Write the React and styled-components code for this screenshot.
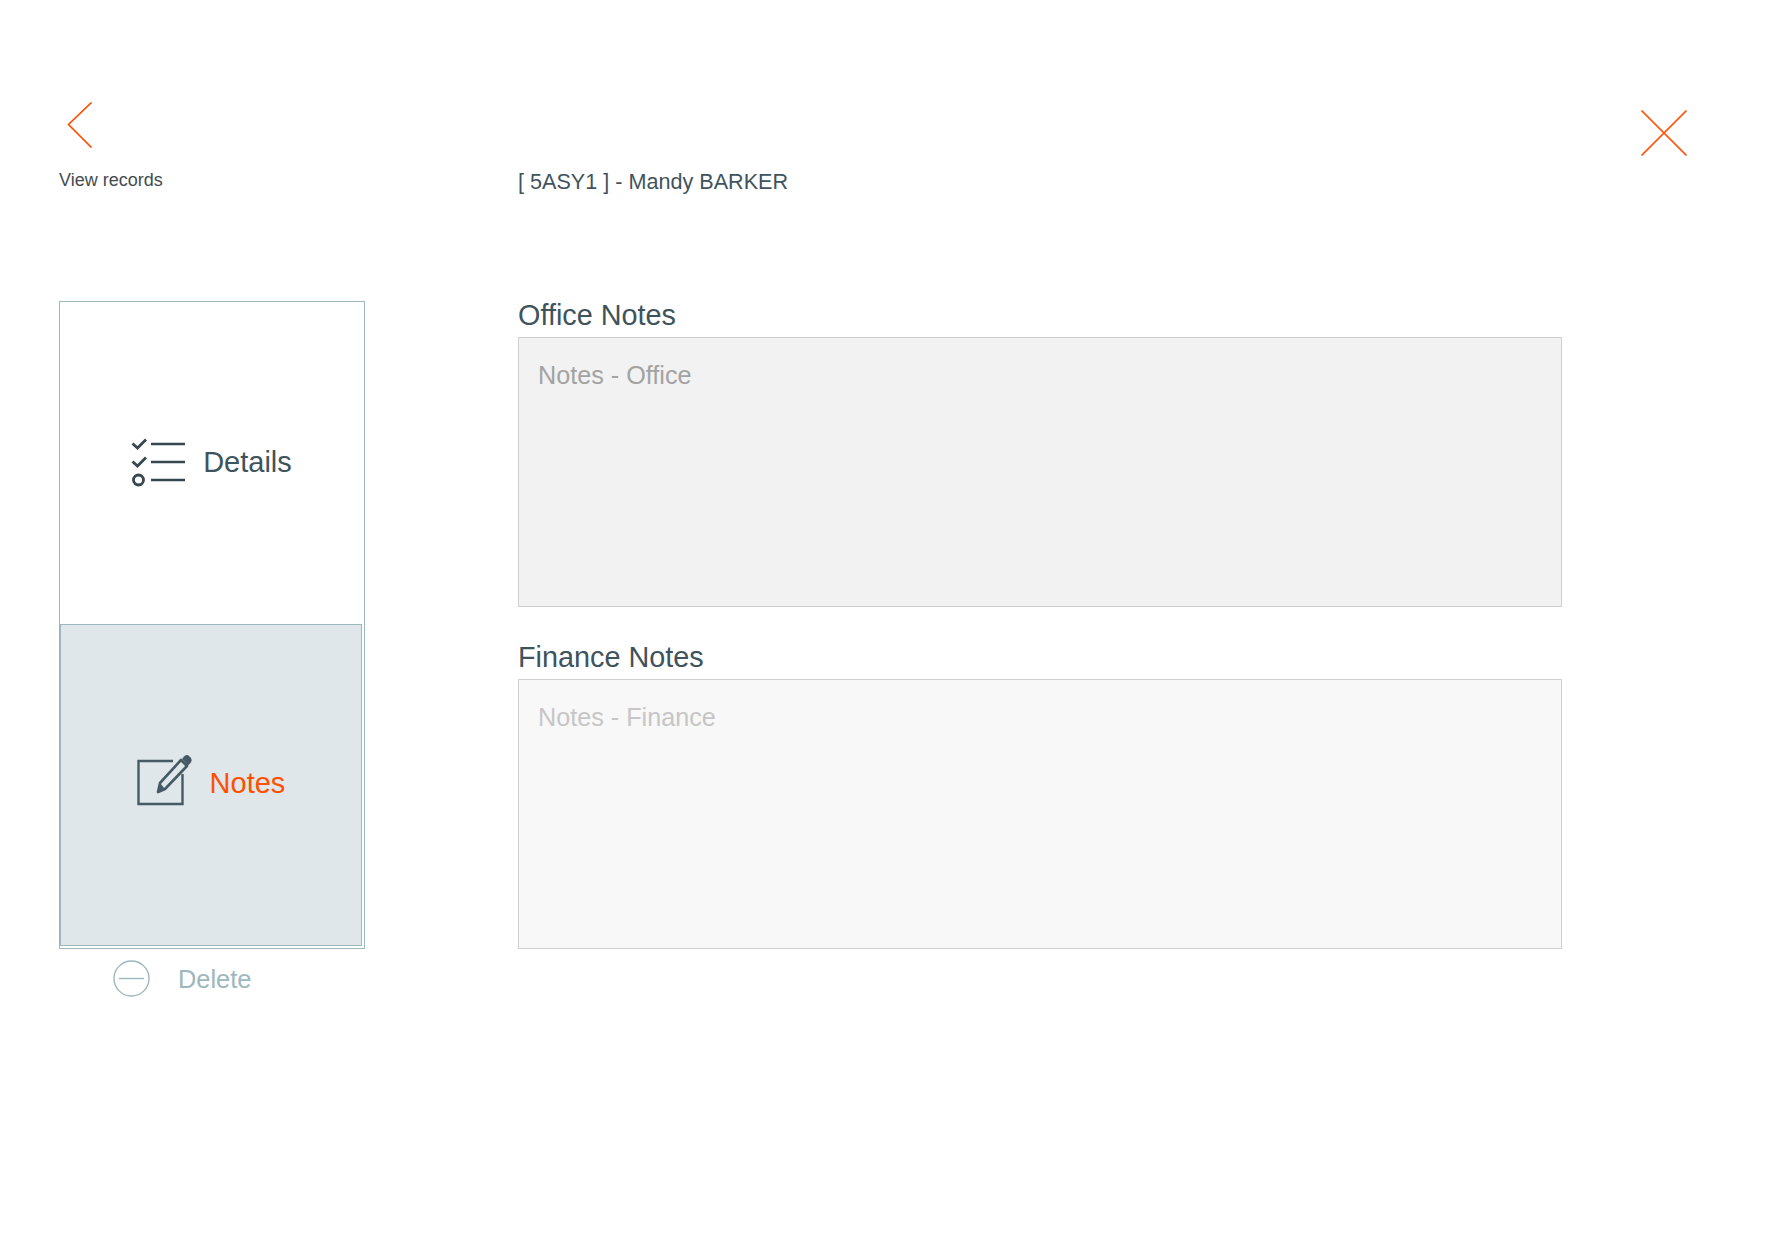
import React from "react";
import styled, { createGlobalStyle } from "styled-components";

const GlobalStyle = createGlobalStyle`
  html, body { margin: 0; padding: 0; background: #fff; }
  body { font-family: "Liberation Sans", Arial, sans-serif; }
  * { box-sizing: border-box; }
`;

const Page = styled.div`
  width: 1790px;
  height: 1248px;
  padding: 102px 103px 0 59px;
`;

const Header = styled.header`
  display: flex;
  align-items: flex-start;
  height: 199px;
`;

const BackColumn = styled.div`
  width: 459px;
  flex-shrink: 0;
  display: flex;
  flex-direction: column;
  align-items: flex-start;
`;

const IconButton = styled.button`
  display: block;
  padding: 0;
  margin: ${(p) => p.$margin || 0};
  border: 0;
  background: none;
  cursor: pointer;
  line-height: 0;
`;

const BackLabel = styled.span`
  margin-top: 22px;
  font-size: 18px;
  line-height: 20px;
  color: #444b4f;
`;

const RecordTitle = styled.h1`
  margin: 67px 0 0;
  font-size: 21.6px;
  line-height: 26px;
  font-weight: 400;
  color: #3f535c;
`;

const Main = styled.main`
  display: flex;
  align-items: flex-start;
  gap: 153px;
`;

const SideColumn = styled.div`
  width: 306px;
  flex-shrink: 0;
`;

const TabList = styled.nav`
  height: 648px;
  border: 1px solid #9db8bd;
  display: flex;
  flex-direction: column;
`;

const Tab = styled.button`
  height: 322px;
  flex-shrink: 0;
  width: ${(p) => (p.$active ? "302px" : "100%")};
  display: flex;
  align-items: center;
  justify-content: center;
  gap: ${(p) => (p.$active ? "18px" : "17px")};
  padding: ${(p) => (p.$active ? "0 0 5px 0" : "0 1px 2px 0")};
  margin: 0;
  border: ${(p) => (p.$active ? "1px solid #9db8bd" : "0")};
  background: ${(p) => (p.$active ? "#dfe7ea" : "#fff")};
  font: inherit;
  cursor: pointer;
`;

const TabLabel = styled.span`
  font-size: 29px;
  line-height: 32px;
  color: ${(p) => (p.$active ? "#ff5000" : "#3f535c")};
`;

const NoteIconWrap = styled.span`
  display: block;
  line-height: 0;
  margin-bottom: 5px;
`;

const DeleteRow = styled.button`
  display: flex;
  align-items: center;
  gap: 28px;
  margin: 11px 0 0 54px;
  padding: 0;
  border: 0;
  background: none;
  cursor: pointer;
`;

const DeleteLabel = styled.span`
  font-size: 25.4px;
  line-height: 30px;
  color: #9db8bd;
`;

const NotesColumn = styled.div`
  width: 1044px;
  flex-shrink: 0;
  display: flex;
  flex-direction: column;
  gap: 37px;
  margin-top: 1px;
`;

const Field = styled.label`
  display: block;
`;

const FieldLabel = styled.span`
  display: block;
  height: 35px;
  font-size: 28.8px;
  line-height: 26px;
  color: #3f535c;
`;

const NotesArea = styled.textarea`
  display: block;
  width: 100%;
  height: ${(p) => p.$height}px;
  padding: 22px 19px;
  border: 1px solid #cfcfcf;
  border-radius: 0;
  outline: none;
  resize: none;
  font-family: inherit;
  font-size: 25.2px;
  line-height: 30px;
  background: ${(p) => (p.disabled ? "#f8f8f8" : "#f2f2f2")};

  &::placeholder {
    color: ${(p) => (p.disabled ? "#c6c6c6" : "#a3a3a3")};
    opacity: 1;
  }
`;

const BackIcon = () => (
  <svg width="34" height="46" viewBox="0 0 34 46" fill="none">
    <path d="M32.5 0.5 L9.5 22.5 L32.5 45.5" stroke="#ff5000" strokeWidth="1.7" />
  </svg>
);

const CloseIcon = () => (
  <svg width="46" height="46" viewBox="0 0 46 46" fill="none">
    <path d="M0.5 0.5 L45.5 45.5 M45.5 0.5 L0.5 45.5" stroke="#ff5a14" strokeWidth="1.7" />
  </svg>
);

const ChecklistIcon = () => (
  <svg width="55" height="50" viewBox="0 0 55 50" fill="none" stroke="#37474f">
    <path d="M1.5 6.5 L6.5 11 L15 2.5" strokeWidth="2.8" />
    <path d="M1.5 24.5 L6.5 29 L15 20.5" strokeWidth="2.8" />
    <circle cx="7.5" cy="43" r="5" strokeWidth="2.8" />
    <path d="M20 7 H54 M20 25 H54 M20 43 H54" strokeWidth="2.6" />
  </svg>
);

const NoteEditIcon = () => (
  <svg width="55" height="52" viewBox="0 0 55 52" fill="none">
    <path d="M36 7 H1.5 V50 H45.5 V20" stroke="#455a64" strokeWidth="2.4" />
    <path d="M44 6 L50 12 L28 35 L21 38 L23 29 Z" stroke="#455a64" strokeWidth="2.6" strokeLinejoin="round" />
    <path d="M23 29 L21 38 L28 35 Z" fill="#455a64" />
    <path d="M47 2.5 Q50 0 52 2 L54 4 Q55.5 7 53 9.5 L51 11.5 L45 5 Z" fill="#455a64" />
  </svg>
);

const DeleteIcon = () => (
  <svg width="37" height="37" viewBox="0 0 37 37" fill="none" stroke="#9db8bd" strokeWidth="1.4">
    <circle cx="18.5" cy="18.5" r="17.5" />
    <path d="M6 18.5 H31" />
  </svg>
);

export default function App() {
  return (
    <Page>
      <GlobalStyle />
      <Header>
        <BackColumn>
          <IconButton aria-label="Back">
            <BackIcon />
          </IconButton>
          <BackLabel>View records</BackLabel>
        </BackColumn>
        <RecordTitle>[ 5ASY1 ] - Mandy BARKER</RecordTitle>
        <IconButton aria-label="Close" $margin="8px 0 0 auto">
          <CloseIcon />
        </IconButton>
      </Header>
      <Main>
        <SideColumn>
          <TabList>
            <Tab>
              <ChecklistIcon />
              <TabLabel>Details</TabLabel>
            </Tab>
            <Tab $active>
              <NoteIconWrap>
                <NoteEditIcon />
              </NoteIconWrap>
              <TabLabel $active>Notes</TabLabel>
            </Tab>
          </TabList>
          <DeleteRow>
            <DeleteIcon />
            <DeleteLabel>Delete</DeleteLabel>
          </DeleteRow>
        </SideColumn>
        <NotesColumn>
          <Field>
            <FieldLabel>Office Notes</FieldLabel>
            <NotesArea $height={270} placeholder="Notes - Office" />
          </Field>
          <Field>
            <FieldLabel>Finance Notes</FieldLabel>
            <NotesArea $height={270} placeholder="Notes - Finance" disabled />
          </Field>
        </NotesColumn>
      </Main>
    </Page>
  );
}
